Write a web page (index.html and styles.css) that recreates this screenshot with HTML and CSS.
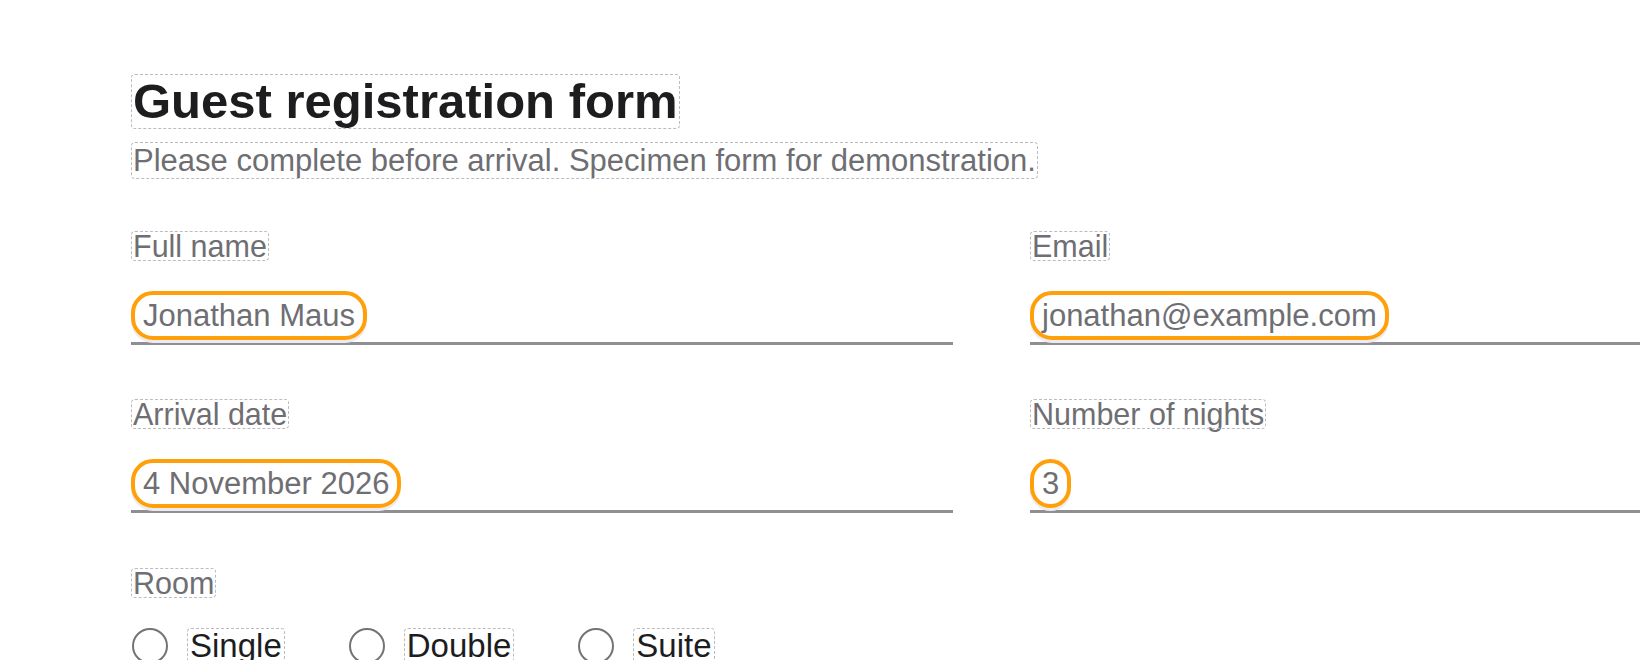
FILE: index.html
```html
<!DOCTYPE html>
<html>
	<head>
		<meta charset="utf-8" />
		<title>Guest registration form</title>
		<link rel="stylesheet" href="styles.css">
	</head>
	<body>
		<main class="form">
			<header class="intro">
				<h1 class="title">Guest registration form</h1>
				<p class="lede">Please complete before arrival. Specimen form for demonstration.</p>
			</header>

			<div class="fields">
				<div class="field">
					<label class="label">Full name</label>
					<div class="input"><span class="value">Jonathan Maus</span></div>
				</div>
				<div class="field">
					<label class="label">Email</label>
					<div class="input"><span class="value">jonathan@example.com</span></div>
				</div>
				<div class="field">
					<label class="label">Arrival date</label>
					<div class="input"><span class="value">4 November 2026</span></div>
				</div>
				<div class="field">
					<label class="label">Number of nights</label>
					<div class="input"><span class="value">3</span></div>
				</div>
			</div>

			<div class="choice">
				<span class="label">Room</span>
				<div class="options">
					<label class="option"><span class="radio"></span><span class="opt-text">Single</span></label>
					<label class="option"><span class="radio"></span><span class="opt-text">Double</span></label>
					<label class="option"><span class="radio"></span><span class="opt-text">Suite</span></label>
				</div>
			</div>
		</main>
	</body>
</html>
```

FILE: styles.css
```css
html,body{
	margin: 0;
	padding: 0;
	overflow: hidden;
	background: #fff;
}
body{
	font-family: "Liberation Sans", Arial, sans-serif;
	color: #1d1d1f;
}
.form{
	padding: 75px 0 0 132px;
}
.intro{
	display: flex;
	flex-direction: column;
	align-items: flex-start;
	gap: 15px;
}
.title,.lede,.label,.opt-text{
	outline: 1px dashed #bcbcc0;
	border-radius: 3px;
}
.title{
	margin: 0;
	padding: 0 1px;
	font-size: 49px;
	line-height: 53px;
	font-weight: 700;
	color: #1d1d1f;
}
.lede{
	margin: 0;
	padding: 0 1px;
	font-size: 31px;
	line-height: 35px;
	color: #6e6e73;
}
.fields{
	display: grid;
	grid-template-columns: 821px 821px;
	column-gap: 78px;
	row-gap: 55px;
	margin-top: 54px;
}
.field{
	display: flex;
	flex-direction: column;
	align-items: flex-start;
	gap: 31px;
}
.label{
	display: inline-block;
	padding: 0 1px;
	font-size: 30.5px;
	line-height: 28px;
	color: #6e6e73;
}
.input{
	align-self: stretch;
	padding-bottom: 2px;
	border-bottom: 3px solid #8e8e93;
	margin-left: -1px;
}
.value{
	display: inline-block;
	padding: 3px 8px;
	border: 4px solid #ff9f0a;
	border-radius: 22px;
	font-size: 31px;
	line-height: 35px;
	color: #6e6e73;
	box-shadow: 0 3px 0 0 #ececf0;
}
.choice{
	display: flex;
	flex-direction: column;
	align-items: flex-start;
	margin-top: 56px;
}
.options{
	display: flex;
	gap: 65px;
	margin-top: 31px;
}
.option{
	display: flex;
	align-items: center;
	gap: 20px;
}
.radio{
	width: 32px;
	height: 32px;
	border: 2px solid #737378;
	border-radius: 50%;
	background: #fff;
}
.opt-text{
	padding: 0 2px;
	font-size: 33px;
	line-height: 34px;
	color: #1d1d1f;
}
```
